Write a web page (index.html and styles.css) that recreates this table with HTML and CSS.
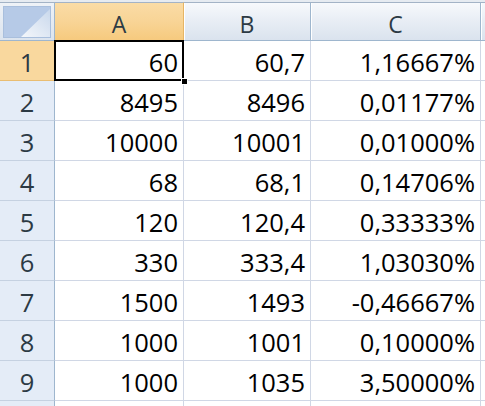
FILE: index.html
```html
<!DOCTYPE html>
<html>
<head>
<meta charset="utf-8">
<link rel="stylesheet" href="styles.css">
</head>
<body>
<div class="topstrip"></div>
<div class="sheet">
  <div class="corner">
    <svg width="54" height="38" viewBox="0 0 54 38">
      <defs>
        <linearGradient id="tri" x1="0" y1="1" x2="1" y2="0">
          <stop offset="0" stop-color="#f4f7fb"/>
          <stop offset="1" stop-color="#c9d8ec"/>
        </linearGradient>
      </defs>
      <rect x="3.5" y="3.5" width="47" height="31" fill="#b6cae7" stroke="#a9bfdd"/>
      <polygon points="50,6 50,34 21,34" fill="url(#tri)"/>
    </svg>
  </div>
  <div class="colhead sel">A</div>
  <div class="colhead">B</div>
  <div class="colhead">C</div>
  <div class="colhead extra"></div>

  <div class="rowhead sel">1</div>
  <div class="cell active">60</div>
  <div class="cell">60,7</div>
  <div class="cell">1,16667%</div>
  <div class="cell extra"></div>

  <div class="rowhead">2</div>
  <div class="cell">8495</div>
  <div class="cell">8496</div>
  <div class="cell">0,01177%</div>
  <div class="cell extra"></div>

  <div class="rowhead">3</div>
  <div class="cell">10000</div>
  <div class="cell">10001</div>
  <div class="cell">0,01000%</div>
  <div class="cell extra"></div>

  <div class="rowhead">4</div>
  <div class="cell">68</div>
  <div class="cell">68,1</div>
  <div class="cell">0,14706%</div>
  <div class="cell extra"></div>

  <div class="rowhead">5</div>
  <div class="cell">120</div>
  <div class="cell">120,4</div>
  <div class="cell">0,33333%</div>
  <div class="cell extra"></div>

  <div class="rowhead">6</div>
  <div class="cell">330</div>
  <div class="cell">333,4</div>
  <div class="cell">1,03030%</div>
  <div class="cell extra"></div>

  <div class="rowhead">7</div>
  <div class="cell">1500</div>
  <div class="cell">1493</div>
  <div class="cell">-0,46667%</div>
  <div class="cell extra"></div>

  <div class="rowhead">8</div>
  <div class="cell">1000</div>
  <div class="cell">1001</div>
  <div class="cell">0,10000%</div>
  <div class="cell extra"></div>

  <div class="rowhead">9</div>
  <div class="cell">1000</div>
  <div class="cell">1035</div>
  <div class="cell">3,50000%</div>
  <div class="cell extra"></div>

  <div class="rowhead last"></div>
  <div class="cell last"></div>
  <div class="cell last"></div>
  <div class="cell last"></div>
  <div class="cell extra last"></div>
</div>
</body>
</html>
```

FILE: styles.css
```css
* { box-sizing: border-box; }

html, body {
  margin: 0;
  padding: 0;
  background: #ffffff;
  overflow: hidden;
  width: 485px;
  height: 406px;
}

.topstrip {
  height: 2px;
  background: #e6ebf1;
}

.sheet {
  display: grid;
  width: 485px;
  height: 404px;
  overflow: hidden;
  grid-template-columns: 55px 129px 127px 170px 1fr;
  grid-template-rows: 39px repeat(9, 40px) 1fr;
  font-family: "Open Sans", "Liberation Sans", sans-serif;
}

.corner {
  border-top: 1px solid #a3b3c6;
  border-right: 1px solid #9eb6ce;
  border-bottom: 1px solid #9eb6ce;
  background: linear-gradient(to bottom, #eef2f7, #dce4ee);
  overflow: hidden;
}

.corner svg {
  display: block;
}

.colhead {
  border-top: 1px solid #a3b3c6;
  border-right: 1px solid #9eb6ce;
  border-bottom: 1px solid #9eb6ce;
  background: linear-gradient(to bottom, #f7f9fc 0%, #e9eef5 45%, #dae3ee 100%);
  box-shadow: inset 1px 0 0 #ffffff;
  display: flex;
  align-items: center;
  justify-content: center;
  padding-top: 4px;
  font-size: 23px;
  color: #2c3a44;
}

.colhead.sel {
  background: linear-gradient(to bottom, #fadca6 0%, #f8d496 50%, #f6ca7e 100%);
  box-shadow: none;
  border-right-color: #e6b565;
  border-bottom-color: #e3ad55;
}

.rowhead {
  border-right: 1px solid #9eb6ce;
  border-bottom: 1px solid #c5d1e1;
  background: #e4ecf7;
  display: flex;
  align-items: center;
  justify-content: center;
  padding-top: 2px;
  font-size: 25.5px;
  color: #2c3a44;
}

.rowhead.sel {
  background: #f9d89e;
  border-bottom-color: #e9bd72;
  border-right-color: #e3ad55;
}

.cell {
  border-right: 1px solid #d0d7e5;
  border-bottom: 1px solid #d0d7e5;
  display: flex;
  align-items: center;
  justify-content: flex-end;
  padding: 2px 5px 0 0;
  font-size: 25.5px;
  color: #000000;
  white-space: nowrap;
}

.last {
  border-bottom: none;
}

.cell.active {
  position: relative;
}

.cell.active::before {
  content: "";
  position: absolute;
  left: -1px;
  top: -1px;
  right: -1px;
  bottom: -1px;
  border: 2px solid #000000;
}

.cell.active::after {
  content: "";
  position: absolute;
  right: -4px;
  bottom: -4px;
  width: 5px;
  height: 5px;
  background: #000000;
  outline: 1px solid #ffffff;
}
```
